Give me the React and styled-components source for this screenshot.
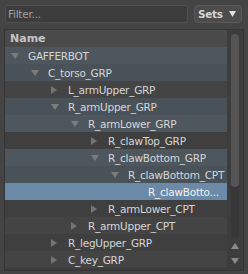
import React from "react";
import styled, { createGlobalStyle } from "styled-components";

const GlobalStyle = createGlobalStyle`
html, body {
    margin: 0;
    padding: 0;
    background: #444444;
}
body {
    font-family: "DejaVu Sans", sans-serif;
    font-size: 10.5px;
    letter-spacing: -0.25px;
    color: #d6d6d6;
}
`;

const nodes = [
    { name: "GAFFERBOT", level: 0, state: "open", path: true },
    { name: "C_torso_GRP", level: 1, state: "open", path: true },
    { name: "L_armUpper_GRP", level: 2, state: "closed" },
    { name: "R_armUpper_GRP", level: 2, state: "open", path: true },
    { name: "R_armLower_GRP", level: 3, state: "open", path: true },
    { name: "R_clawTop_GRP", level: 4, state: "closed" },
    { name: "R_clawBottom_GRP", level: 4, state: "open", path: true },
    { name: "R_clawBottom_CPT", level: 5, state: "open", path: true },
    { name: "R_clawBotto...", level: 6, state: "leaf", selected: true },
    { name: "R_armLower_CPT", level: 4, state: "closed" },
    { name: "R_armUpper_CPT", level: 3, state: "closed" },
    { name: "R_legUpper_GRP", level: 2, state: "closed" },
    { name: "C_key_GRP", level: 2, state: "closed" },
];

const rowColor = (node, i) => {
    if (node.selected) return "#6a8aa8";
    if (node.path) return i % 2 ? "#4a5259" : "#4e565e";
    return i % 2 ? "#3f3f3f" : "#444444";
};

const Caret = ({ open }) =>
    open ? (
        <svg width="8" height="6" viewBox="0 0 8 6">
            <polygon points="0,0 8,0 4,6" fill="#7c7c7c" />
        </svg>
    ) : (
        <svg width="6" height="8" viewBox="0 0 6 8">
            <polygon points="0,0 6,4 0,8" fill="#747474" />
        </svg>
    );

const App = () => {
    return (
        <Wrap>
            <GlobalStyle />
            <TopBar>
                <Filter placeholder="Filter..." />
                <SetsButton>
                    Sets
                    <svg width="7" height="6" viewBox="0 0 7 6">
                        <polygon points="0,0 7,0 3.5,6" fill="#e0e0e0" />
                    </svg>
                </SetsButton>
            </TopBar>
            <Panel>
                <Tree>
                    <Header>Name</Header>
                    {nodes.map((node, i) => (
                        <Row key={node.name} $bg={rowColor(node, i)} $level={node.level}>
                            <Toggle>{node.state !== "leaf" && <Caret open={node.state === "open"} />}</Toggle>
                            <Label $selected={node.selected}>{node.name}</Label>
                        </Row>
                    ))}
                </Tree>
                <Scroll>
                    <Track>
                        <Thumb />
                    </Track>
                    <Arrow>
                        <svg width="8" height="6" viewBox="0 0 8 6">
                            <polygon points="4,0 8,6 0,6" fill="#8a8a8a" />
                        </svg>
                    </Arrow>
                    <Arrow>
                        <svg width="8" height="6" viewBox="0 0 8 6">
                            <polygon points="0,0 8,0 4,6" fill="#8a8a8a" />
                        </svg>
                    </Arrow>
                </Scroll>
            </Panel>
        </Wrap>
    );
};

export default App;

const Wrap = styled.div`
width: 248px;
height: 274px;
box-sizing: border-box;
padding: 5px 4px 0 4px;
display: flex;
flex-direction: column;
overflow: hidden;
`;

const TopBar = styled.div`
display: flex;
align-items: stretch;
gap: 6px;
height: 18px;
padding: 0 2px 0 1px;
`;

const Filter = styled.input`
flex: 1;
min-width: 0;
box-sizing: border-box;
height: 18px;
background: #3c3c3c;
border: 1px solid #505050;
border-radius: 3px;
padding: 0 3px 0 2px;
font-family: inherit;
font-size: 10.5px;
letter-spacing: -0.25px;
color: #d6d6d6;
outline: none;
&::placeholder {
    color: #a0a0a0;
}
`;

const SetsButton = styled.div`
width: 48px;
box-sizing: border-box;
display: flex;
align-items: center;
justify-content: space-between;
padding: 0 5px 0 3px;
background: #4c4c4c;
border: 1px solid #5a5a5a;
border-radius: 4px;
font-weight: bold;
font-size: 10.5px;
letter-spacing: -0.3px;
color: #d4d4d4;
`;

const Panel = styled.div`
margin-top: 6px;
height: 240px;
display: flex;
border: 1px solid #353535;
background: #3d3d3d;
`;

const Tree = styled.div`
flex: 1;
display: flex;
flex-direction: column;
min-width: 0;
`;

const Header = styled.div`
height: 17px;
display: flex;
align-items: center;
padding-left: 5px;
background: #4a4a4a;
font-weight: bold;
font-size: 11px;
letter-spacing: 0;
color: #c4c4c4;
`;

const Row = styled.div`
height: 17px;
flex-shrink: 0;
display: flex;
align-items: center;
padding-left: ${p => p.$level * 20}px;
background: ${p => p.$bg};
`;

const Toggle = styled.div`
width: 23px;
flex-shrink: 0;
box-sizing: border-box;
padding-left: 6px;
display: flex;
align-items: center;
`;

const Label = styled.span`
white-space: nowrap;
line-height: 15px;
padding-top: 1px;
color: ${p => (p.$selected ? "#f0f0f0" : "#d6d6d6")};
`;

const Scroll = styled.div`
width: 16px;
display: flex;
flex-direction: column;
align-items: center;
padding-top: 4px;
`;

const Track = styled.div`
width: 8px;
height: 204px;
border-radius: 4px;
background: #383838;
display: flex;
flex-direction: column;
`;

const Thumb = styled.div`
height: 153px;
border-radius: 4px;
background: #555555;
`;

const Arrow = styled.div`
height: 15px;
display: flex;
align-items: center;
justify-content: center;
`;
